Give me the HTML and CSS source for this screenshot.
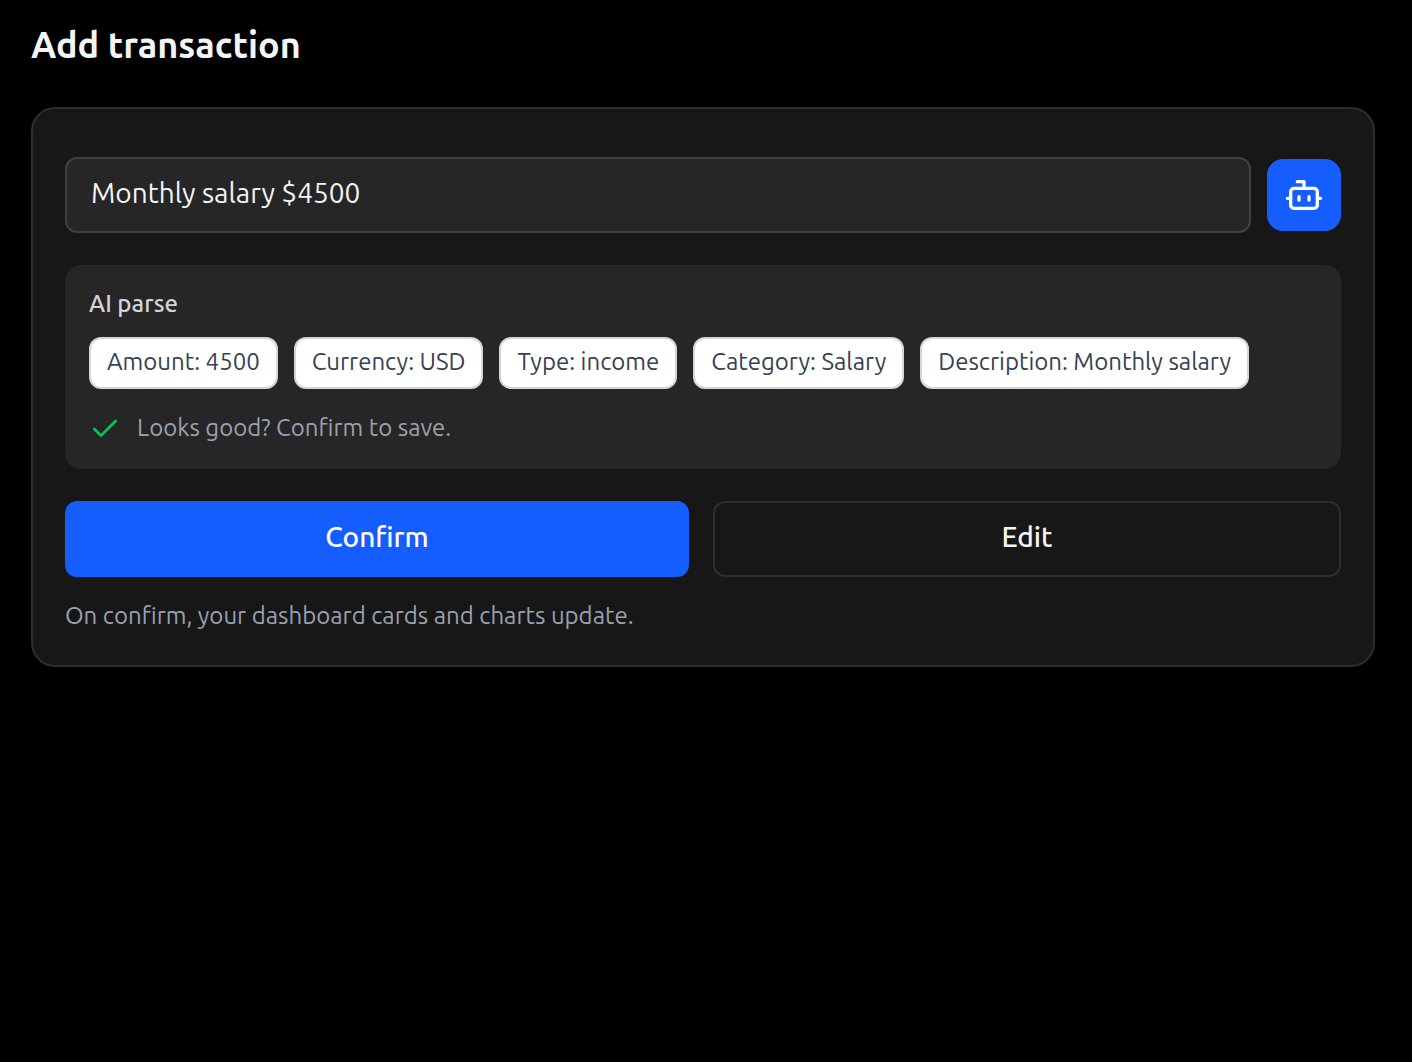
FILE: index.html
```html
<!DOCTYPE html>
<html lang="en">
<head>
<meta charset="utf-8">
<meta name="viewport" content="width=device-width, initial-scale=1">
<title>Add transaction</title>
<link rel="stylesheet" href="styles.css">
</head>
<body>
<main class="page">
  <h1 class="page-title">Add transaction</h1>
  <form class="card">
    <div class="entry">
      <input class="entry-input" type="text" aria-label="Transaction" value="Monthly salary $4500">
      <button class="parse-button" type="button" aria-label="Parse with AI">
        <svg class="bot-icon" viewBox="0 0 24 24" aria-hidden="true">
          <path d="M12 8V4H8"/>
          <rect width="16" height="12" x="4" y="8" rx="2"/>
          <path d="M2 14h2M20 14h2M15 13v2M9 13v2"/>
        </svg>
      </button>
    </div>
    <section class="parse">
      <h2 class="parse-title">AI parse</h2>
      <ul class="chips">
        <li class="chip">Amount: 4500</li>
        <li class="chip">Currency: USD</li>
        <li class="chip">Type: income</li>
        <li class="chip">Category: Salary</li>
        <li class="chip">Description: Monthly salary</li>
      </ul>
      <p class="hint">
        <svg class="check-icon" viewBox="0 0 24 24" aria-hidden="true"><path d="M20 6 9 17l-5-5"/></svg>
        Looks good? Confirm to save.
      </p>
    </section>
    <div class="actions">
      <button class="button button-primary" type="submit">Confirm</button>
      <button class="button button-outline" type="button">Edit</button>
    </div>
    <p class="note">On confirm, your dashboard cards and charts update.</p>
  </form>
</main>
</body>
</html>
```

FILE: styles.css
```css
* {
  box-sizing: border-box;
  margin: 0;
}

body {
  background: #000;
  color: #f3f4f6;
  font-family: Ubuntu, "Open Sans", "Noto Sans", sans-serif;
  font-size: 24px;
  line-height: 30px;
}

.page {
  padding: 25px 37px 32px 31px;
}

.page-title {
  margin-bottom: 42px;
  font-size: 36px;
  font-weight: 600;
  line-height: 40px;
}

.card {
  padding: 48px 32px 34px;
  background: #171717;
  border: 2px solid #2e2e2e;
  border-radius: 24px;
}

.entry {
  display: flex;
  align-items: center;
  gap: 16px;
}

.entry-input {
  flex: 1;
  min-width: 0;
  padding: 16px 24px 20px;
  background: #262626;
  border: 2px solid #404040;
  border-radius: 12px;
  color: inherit;
  font: inherit;
  font-size: 28px;
  line-height: 36px;
}

.parse-button {
  display: flex;
  padding: 16px 17px;
  background: #155dfc;
  border: 0;
  border-radius: 16px;
  color: #fff;
}

.bot-icon,
.check-icon {
  flex: none;
  fill: none;
  stroke: currentColor;
  stroke-width: 2;
  stroke-linecap: round;
  stroke-linejoin: round;
}

.bot-icon {
  width: 40px;
  height: 40px;
}

.parse {
  margin-top: 32px;
  padding: 24px;
  background: #262626;
  border-radius: 16px;
}

.parse-title {
  margin-bottom: 18px;
  color: #d1d5dc;
  font-size: 24px;
  font-weight: 500;
}

.chips {
  display: flex;
  flex-wrap: wrap;
  gap: 16px;
  padding: 0;
  list-style: none;
}

.chip {
  padding: 8px 16px 10px;
  background: #fff;
  border: 2px solid #d1d5dc;
  border-radius: 12px;
  color: #364153;
}

.hint {
  display: flex;
  align-items: flex-start;
  gap: 16px;
  margin-top: 24px;
  color: #99a1af;
}

.check-icon {
  width: 32px;
  height: 32px;
  color: #00c950;
}

.actions {
  display: flex;
  gap: 24px;
  margin-top: 32px;
}

.button {
  flex: 1;
  border: 0;
  border-radius: 12px;
  min-height: 76px;
  padding: 16px 24px 20px;
  font: inherit;
  font-size: 28px;
  font-weight: 500;
}

.button-primary {
  background: #155dfc;
  color: #fff;
}

.button-outline {
  background: transparent;
  border: 2px solid #2e2e2e;
  color: #f3f4f6;
}

.note {
  margin-top: 24px;
  color: #99a1af;
}
```
